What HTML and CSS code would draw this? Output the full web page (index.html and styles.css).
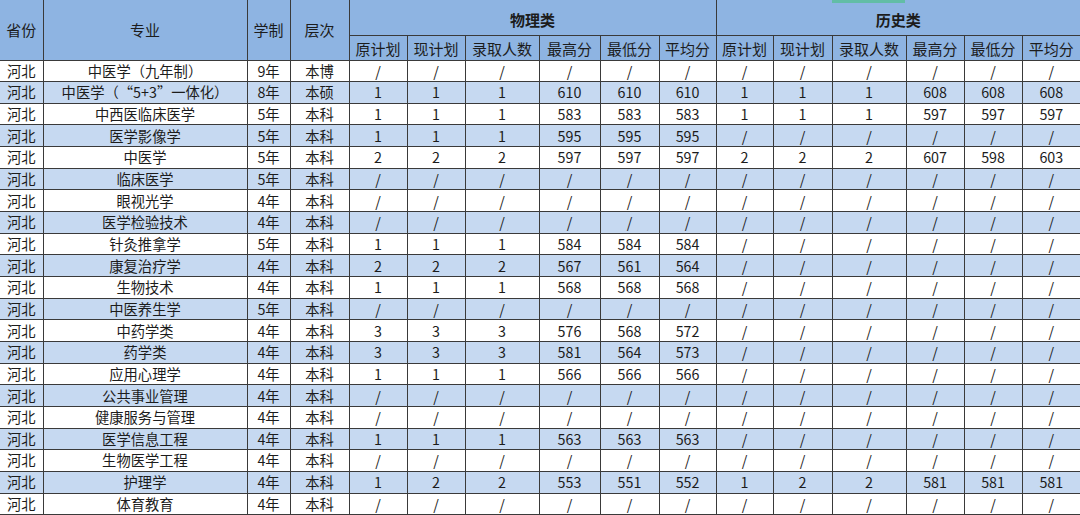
FILE: index.html
```html
<!DOCTYPE html>
<html lang="zh">
<head>
<meta charset="utf-8">
<title>录取统计</title>
<link rel="stylesheet" href="styles.css">
</head>
<body>
<div class="sheet-wrap">
<div class="select-mark"></div>
<table class="sheet">
<colgroup>
<col style="width:43px"><col style="width:204px"><col style="width:43px"><col style="width:59px">
<col style="width:58px"><col style="width:58px"><col style="width:74px"><col style="width:61px"><col style="width:59px"><col style="width:57px">
<col style="width:57px"><col style="width:59px"><col style="width:74px"><col style="width:58px"><col style="width:58px"><col style="width:58px">
</colgroup>
<thead>
<tr class="h1">
<th rowspan="2">省份</th><th rowspan="2">专业</th><th rowspan="2">学制</th><th rowspan="2">层次</th>
<th colspan="6" class="group">物理类</th><th colspan="6" class="group">历史类</th>
</tr>
<tr class="h2">
<th>原计划</th><th>现计划</th><th>录取人数</th><th>最高分</th><th>最低分</th><th>平均分</th>
<th>原计划</th><th>现计划</th><th>录取人数</th><th>最高分</th><th>最低分</th><th>平均分</th>
</tr>
</thead>
<tbody>
<tr><td>河北</td><td>中医学（九年制）</td><td>9年</td><td>本博</td><td>/</td><td>/</td><td>/</td><td>/</td><td>/</td><td>/</td><td>/</td><td>/</td><td>/</td><td>/</td><td>/</td><td>/</td></tr>
<tr><td>河北</td><td>中医学（<span class="fw">“</span>5+3<span class="fw">”</span>一体化）</td><td>8年</td><td>本硕</td><td>1</td><td>1</td><td>1</td><td>610</td><td>610</td><td>610</td><td>1</td><td>1</td><td>1</td><td>608</td><td>608</td><td>608</td></tr>
<tr><td>河北</td><td>中西医临床医学</td><td>5年</td><td>本科</td><td>1</td><td>1</td><td>1</td><td>583</td><td>583</td><td>583</td><td>1</td><td>1</td><td>1</td><td>597</td><td>597</td><td>597</td></tr>
<tr><td>河北</td><td>医学影像学</td><td>5年</td><td>本科</td><td>1</td><td>1</td><td>1</td><td>595</td><td>595</td><td>595</td><td>/</td><td>/</td><td>/</td><td>/</td><td>/</td><td>/</td></tr>
<tr><td>河北</td><td>中医学</td><td>5年</td><td>本科</td><td>2</td><td>2</td><td>2</td><td>597</td><td>597</td><td>597</td><td>2</td><td>2</td><td>2</td><td>607</td><td>598</td><td>603</td></tr>
<tr><td>河北</td><td>临床医学</td><td>5年</td><td>本科</td><td>/</td><td>/</td><td>/</td><td>/</td><td>/</td><td>/</td><td>/</td><td>/</td><td>/</td><td>/</td><td>/</td><td>/</td></tr>
<tr><td>河北</td><td>眼视光学</td><td>4年</td><td>本科</td><td>/</td><td>/</td><td>/</td><td>/</td><td>/</td><td>/</td><td>/</td><td>/</td><td>/</td><td>/</td><td>/</td><td>/</td></tr>
<tr><td>河北</td><td>医学检验技术</td><td>4年</td><td>本科</td><td>/</td><td>/</td><td>/</td><td>/</td><td>/</td><td>/</td><td>/</td><td>/</td><td>/</td><td>/</td><td>/</td><td>/</td></tr>
<tr><td>河北</td><td>针灸推拿学</td><td>5年</td><td>本科</td><td>1</td><td>1</td><td>1</td><td>584</td><td>584</td><td>584</td><td>/</td><td>/</td><td>/</td><td>/</td><td>/</td><td>/</td></tr>
<tr><td>河北</td><td>康复治疗学</td><td>4年</td><td>本科</td><td>2</td><td>2</td><td>2</td><td>567</td><td>561</td><td>564</td><td>/</td><td>/</td><td>/</td><td>/</td><td>/</td><td>/</td></tr>
<tr><td>河北</td><td>生物技术</td><td>4年</td><td>本科</td><td>1</td><td>1</td><td>1</td><td>568</td><td>568</td><td>568</td><td>/</td><td>/</td><td>/</td><td>/</td><td>/</td><td>/</td></tr>
<tr><td>河北</td><td>中医养生学</td><td>5年</td><td>本科</td><td>/</td><td>/</td><td>/</td><td>/</td><td>/</td><td>/</td><td>/</td><td>/</td><td>/</td><td>/</td><td>/</td><td>/</td></tr>
<tr><td>河北</td><td>中药学类</td><td>4年</td><td>本科</td><td>3</td><td>3</td><td>3</td><td>576</td><td>568</td><td>572</td><td>/</td><td>/</td><td>/</td><td>/</td><td>/</td><td>/</td></tr>
<tr><td>河北</td><td>药学类</td><td>4年</td><td>本科</td><td>3</td><td>3</td><td>3</td><td>581</td><td>564</td><td>573</td><td>/</td><td>/</td><td>/</td><td>/</td><td>/</td><td>/</td></tr>
<tr><td>河北</td><td>应用心理学</td><td>4年</td><td>本科</td><td>1</td><td>1</td><td>1</td><td>566</td><td>566</td><td>566</td><td>/</td><td>/</td><td>/</td><td>/</td><td>/</td><td>/</td></tr>
<tr><td>河北</td><td>公共事业管理</td><td>4年</td><td>本科</td><td>/</td><td>/</td><td>/</td><td>/</td><td>/</td><td>/</td><td>/</td><td>/</td><td>/</td><td>/</td><td>/</td><td>/</td></tr>
<tr><td>河北</td><td>健康服务与管理</td><td>4年</td><td>本科</td><td>/</td><td>/</td><td>/</td><td>/</td><td>/</td><td>/</td><td>/</td><td>/</td><td>/</td><td>/</td><td>/</td><td>/</td></tr>
<tr><td>河北</td><td>医学信息工程</td><td>4年</td><td>本科</td><td>1</td><td>1</td><td>1</td><td>563</td><td>563</td><td>563</td><td>/</td><td>/</td><td>/</td><td>/</td><td>/</td><td>/</td></tr>
<tr><td>河北</td><td>生物医学工程</td><td>4年</td><td>本科</td><td>/</td><td>/</td><td>/</td><td>/</td><td>/</td><td>/</td><td>/</td><td>/</td><td>/</td><td>/</td><td>/</td><td>/</td></tr>
<tr><td>河北</td><td>护理学</td><td>4年</td><td>本科</td><td>1</td><td>2</td><td>2</td><td>553</td><td>551</td><td>552</td><td>1</td><td>2</td><td>2</td><td>581</td><td>581</td><td>581</td></tr>
<tr><td>河北</td><td>体育教育</td><td>4年</td><td>本科</td><td>/</td><td>/</td><td>/</td><td>/</td><td>/</td><td>/</td><td>/</td><td>/</td><td>/</td><td>/</td><td>/</td><td>/</td></tr>
</tbody>
</table>
</div>
</body>
</html>
```
FILE: styles.css
```css
html, body {
  margin: 0;
  padding: 0;
  background: #ffffff;
  overflow: hidden;
}
.sheet-wrap {
  position: relative;
  width: 1080px;
}
.select-mark {
  position: absolute;
  left: 832px;
  top: 0;
  width: 73px;
  height: 3px;
  background: #62bda6;
  z-index: 2;
}
.sheet {
  border-collapse: collapse;
  table-layout: fixed;
  width: 1080px;
  font-family: "Noto Sans CJK SC", "Microsoft YaHei", sans-serif;
  font-size: 14.3px;
  color: #1c1c1c;
}
.sheet th, .sheet td {
  box-sizing: border-box;
  border: 1px solid #3a3a3a;
  padding: 0;
  text-align: center;
  white-space: nowrap;
  overflow: hidden;
  line-height: 1;
}
.sheet tr > :first-child {
  border-left: none;
}
.sheet tr > :last-child {
  border-right: none;
}
.sheet thead th {
  background: #8eb4e2;
  font-weight: 400;
  font-size: 15px;
}
.sheet thead tr.h1 {
  height: 35px;
}
.sheet thead tr.h1 th {
  border-top: none;
}
.sheet thead tr.h1 th.group {
  font-weight: 700;
  padding-top: 4px;
}
.sheet thead tr.h2 {
  height: 25px;
}
.sheet thead tr.h2 th {
  padding-top: 2px;
}
.sheet tbody tr {
  height: 21.67px;
}
.sheet tbody tr:nth-child(even) td {
  background: #c6d9f1;
}
.fw {
  display: inline-block;
  width: 1em;
}
.fw:first-child {
  text-align: right;
}
```
